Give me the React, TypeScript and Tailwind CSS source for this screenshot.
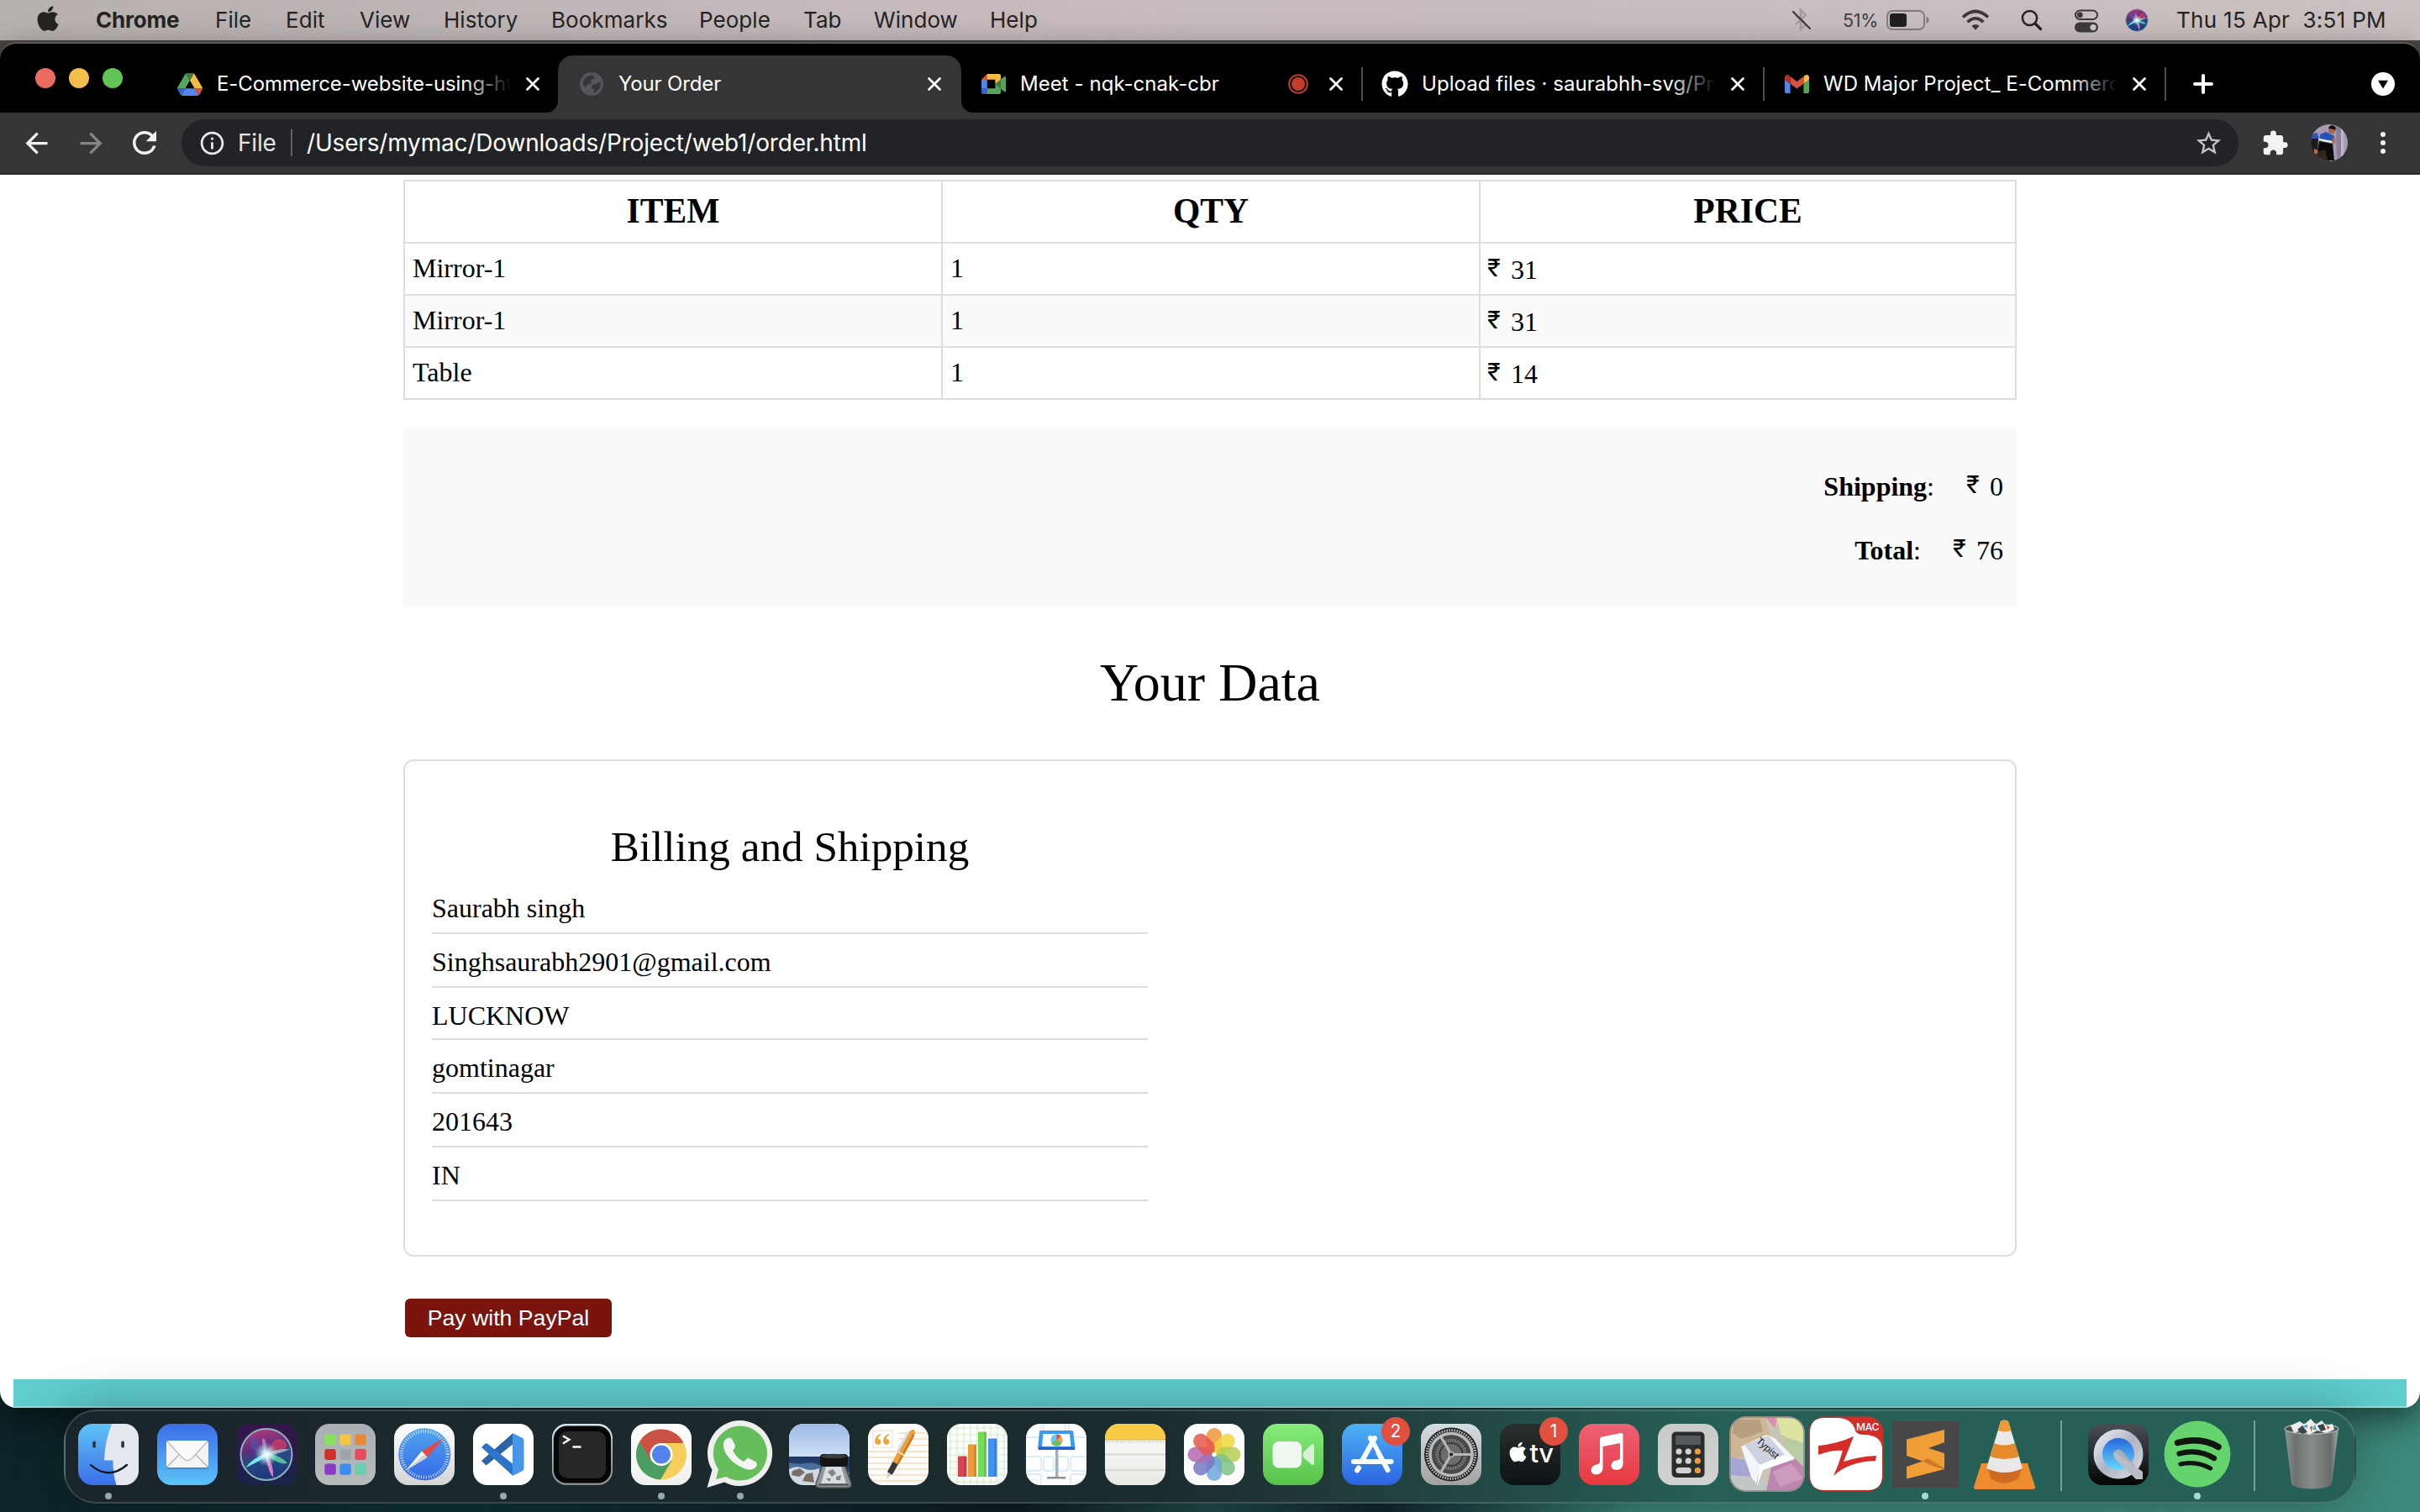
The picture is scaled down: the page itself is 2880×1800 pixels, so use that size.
import React from "react";
import {
  MdArrowBack,
  MdArrowForward,
  MdRefresh,
  MdInfoOutline,
  MdStarBorder,
  MdExtension,
} from "react-icons/md";
import { FaApple, FaGithub } from "react-icons/fa";

type Kids = { children?: React.ReactNode };

/* ------------------------------------------------------------ menu bar */

const menus: [string, string][] = [
  ["File", "w-[84px]"],
  ["Edit", "w-[88px]"],
  ["View", "w-[100px]"],
  ["History", "w-[128px]"],
  ["Bookmarks", "w-[176px]"],
  ["People", "w-[124px]"],
  ["Tab", "w-[84px]"],
  ["Window", "w-[138px]"],
  ["Help", "w-[90px]"],
];

function SiriOrb({ id, size }: { id: string; size: number }) {
  return (
    <svg width={size} height={size} viewBox="0 0 64 64" className="block shrink-0">
      <defs>
        <linearGradient id={id + "a"} x1="0" y1="0" x2="0.2" y2="1">
          <stop offset="0" stopColor="#c03a86" />
          <stop offset="0.45" stopColor="#5b2f78" />
          <stop offset="0.65" stopColor="#274a86" />
          <stop offset="1" stopColor="#1d3a7c" />
        </linearGradient>
        <radialGradient id={id + "b"}>
          <stop offset="0" stopColor="#fff" />
          <stop offset="0.3" stopColor="#dffcff" stopOpacity="0.85" />
          <stop offset="1" stopColor="#8fe8f0" stopOpacity="0" />
        </radialGradient>
      </defs>
      <circle cx="32" cy="32" r="30.5" fill={"url(#" + id + "a)"} stroke="#8fb3b5" strokeWidth="2" />
      <path d="M33 32Q40 6 55 17Q62 28 33 32Z" fill="#e0405f" opacity="0.65" />
      <path d="M31 32Q22 10 14 12Q6 28 31 32Z" fill="#5e4fa0" opacity="0.7" />
      <path d="M31 31Q16 36 7 48Q20 42 33 34Z" fill="#7ff0ee" opacity="0.95" />
      <path d="M32 30Q50 34 57 42Q50 46 32 33Z" fill="#58c9a0" opacity="0.9" />
      <path d="M31 31Q41 42 40 59Q36 56 30 33Z" fill="#f07fc6" opacity="0.95" />
      <path d="M31 32Q34 12 27 13Q26 22 30 33Z" fill="#e9a3dc" opacity="0.55" />
      <path d="M32 32Q46 24 60 26Q48 31 32 34Z" fill="#b6f2e6" opacity="0.6" />
      <circle cx="32" cy="32" r="14" fill={"url(#" + id + "b)"} />
    </svg>
  );
}

function MenuBar() {
  return (
    <div className="h-12 w-full flex items-center text-[#242323] text-[26px] bg-linear-to-r from-[#b7b1af] from-0% via-[#c6babd] via-40% to-[#cac0c0] tracking-[0.05px]">
      <div className="w-[114px] pl-[40px] shrink-0">
        <FaApple size={34} className="-mt-1" />
      </div>
      <div className="w-[142px] font-bold tracking-[-0.2px] -mt-[2px]">Chrome</div>
      {menus.map(([m, w]) => (
        <div key={m} className={w + " shrink-0 -mt-[2px]"}>
          {m}
        </div>
      ))}
      <div className="ml-auto flex items-center h-full">
        <div className="w-[61px]">
          <svg width="26" height="30" viewBox="0 0 26 30" fill="none">
            <path d="M5 9L17 20L11 26V3L17 9L5 20" stroke="#a19a9b" strokeWidth="2.4" />
            <path d="M2 5L22 25" stroke="#3b3939" strokeWidth="2.2" strokeLinecap="round" />
          </svg>
        </div>
        <div className="w-[52px] text-[21.5px] text-[#3f3c3d] tracking-[-0.3px]">51%</div>
        <div className="w-[89px]">
          <svg width="52" height="24" viewBox="0 0 52 24">
            <rect x="1" y="1" width="44" height="22" rx="6" fill="none" stroke="#7f797a" strokeWidth="1.8" />
            <rect x="4" y="4" width="20" height="16" rx="3" fill="#201f1f" />
            <path d="M47.5 8V16Q50.5 15 50.5 12T47.5 8Z" fill="#7f797a" />
          </svg>
        </div>
        <div className="w-[71px]">
          <svg width="34" height="26" viewBox="0 0 34 26" fill="none" stroke="#3a3838" strokeWidth="3.6">
            <path d="M2 9.5Q17 -4.5 32 9.5" />
            <path d="M7.6 15.3Q17 6.3 26.4 15.3" />
            <path d="M12.3 19.8Q17 16 21.7 19.8L17 24.8Z" fill="#3a3838" stroke="none" />
          </svg>
        </div>
        <div className="w-[63px]">
          <svg width="26" height="26" viewBox="0 0 26 26" fill="none" stroke="#242323" strokeLinecap="round">
            <circle cx="10.5" cy="10.5" r="8.6" strokeWidth="2.5" />
            <path d="M17 17L23.5 23.5" strokeWidth="3.2" />
          </svg>
        </div>
        <div className="w-[61px] pt-[2px]">
          <svg width="30" height="28" viewBox="0 0 30 28">
            <rect x="2" y="1.6" width="26" height="10.4" rx="5.2" fill="none" stroke="#3a3838" strokeWidth="2" />
            <circle cx="7.3" cy="6.8" r="3.4" fill="#3a3838" />
            <rect x="1" y="15.6" width="28" height="12" rx="6" fill="#3a3838" />
            <circle cx="23" cy="21.6" r="3.6" fill="#c9bfc0" />
          </svg>
        </div>
        <div className="w-[61px]">
          <SiriOrb id="ms" size={28} />
        </div>
        <div className="w-[290px] -mt-[2px] whitespace-pre tracking-[0.3px]">Thu 15 Apr  3:51 PM</div>
      </div>
    </div>
  );
}

/* ------------------------------------------------------------ favicons */

const DriveIcon = () => (
  <svg width="30" height="27" viewBox="0 0 87.3 78">
    <path d="m6.6 66.85 3.85 6.65c.8 1.4 1.95 2.5 3.3 3.3l13.75-23.8h-27.5c0 1.55.4 3.1 1.2 4.5z" fill="#3a62c9" />
    <path d="m43.65 25-13.75-23.8c-1.35.8-2.5 1.9-3.3 3.3l-25.4 44a9.06 9.06 0 0 0 -1.2 4.5h27.5z" fill="#57a55a" />
    <path d="m73.55 76.8c1.35-.8 2.5-1.9 3.3-3.3l1.6-2.75 7.65-13.25c.8-1.4 1.2-2.95 1.2-4.5h-27.502l5.852 11.5z" fill="#d85140" />
    <path d="m43.65 25 13.75-23.8c-1.35-.8-2.9-1.2-4.5-1.2h-18.5c-1.6 0-3.15.45-4.5 1.2z" fill="#3a7d3c" />
    <path d="m59.8 53h-32.3l-13.75 23.8c1.35.8 2.9 1.2 4.5 1.2h50.8c1.6 0 3.15-.45 4.5-1.2z" fill="#5187ec" />
    <path d="m73.4 26.5-12.7-22c-.8-1.4-1.95-2.5-3.3-3.3l-13.75 23.8 16.15 28h27.45c0-1.55-.4-3.1-1.2-4.5z" fill="#f2bd42" />
  </svg>
);

const GlobeIcon = () => (
  <svg width="28" height="28" viewBox="0 0 28 28">
    <circle cx="14" cy="14" r="14" fill="#54565c" />
    <path d="M5 9Q9 3 15 3.5L18 7L13 9.5L14 13L9 14.5L7 18L3.5 14ZM15 15L20 13.5L24.5 11Q26 19 19 23.8L16 24.5L17 20.5L13.5 18Z" fill="#35363a" />
  </svg>
);

const MeetIcon = () => (
  <svg width="29" height="24" viewBox="0 0 87.5 72">
    <path fill="#3a7d3c" d="M49.5 36l8.53 9.75 11.47 7.33 2-17.02-2-16.64-11.69 6.44z" />
    <path fill="#3a62c9" d="M0 51.5V66c0 3.315 2.685 6 6 6h14.5l3-10.96-3-9.54-9.95-3z" />
    <path fill="#d85140" d="M20.5 0L0 20.5l10.55 3 9.95-3 2.95-9.41z" />
    <path fill="#5187ec" d="M20.5 20.5H0v31h20.5z" />
    <path fill="#57a55a" d="M82.6 8.68L69.5 19.42v33.66l13.16 10.79c1.97 1.54 4.85.135 4.85-2.37V11c0-2.535-2.945-3.925-4.91-2.32zM49.5 36v15.5h-29V72h43c3.315 0 6-2.685 6-6V53.08z" />
    <path fill="#f2bd42" d="M63.5 0h-43v20.5h29V36l20-16.57V6c0-3.315-2.685-6-6-6z" />
  </svg>
);

const GmailIcon = () => (
  <svg width="29" height="22" viewBox="52 42 88 66">
    <path fill="#5187ec" d="M58 108h14V74L52 59v43c0 3.32 2.69 6 6 6" />
    <path fill="#57a55a" d="M120 108h14c3.32 0 6-2.69 6-6V59l-20 15" />
    <path fill="#f2bd42" d="M120 48v26l20-15v-8c0-7.42-8.47-11.65-14.4-7.2" />
    <path fill="#d85140" d="M72 74V48l24 18 24-18v26L96 92" />
    <path fill="#b7312c" d="M52 51v8l20 15V48l-5.6-4.2c-5.94-4.45-14.4-.22-14.4 7.2" />
  </svg>
);

const Cross = () => (
  <svg width="16" height="16" viewBox="0 0 16 16" stroke="#fff" strokeWidth="2.7" strokeLinecap="round">
    <path d="M1.5 1.5L14.5 14.5M14.5 1.5L1.5 14.5" />
  </svg>
);

/* ------------------------------------------------------------ tab strip */

type TabProps = {
  icon: React.ReactNode;
  title: string;
  spacing: string;
  active?: boolean;
  fade?: boolean;
  rec?: boolean;
  divider?: boolean;
};

function Tab({ icon, title, spacing, active, fade, rec, divider }: TabProps) {
  return (
    <div className={"relative h-[68px] w-[478px] shrink-0 flex items-center " + (active ? "bg-[#353535] rounded-t-[18px] z-10" : "")}>
      {active && (
        <>
          <svg className="absolute -left-[14px] bottom-0" width="14" height="14" viewBox="0 0 14 14">
            <path d="M14 0A14 14 0 0 1 0 14H14Z" fill="#353535" />
          </svg>
          <svg className="absolute -right-[16px] bottom-0" width="16" height="14" viewBox="0 0 16 14">
            <path d="M0 0H2A14 14 0 0 0 16 14H0Z" fill="#353535" />
          </svg>
          <div className="absolute -right-[2px] top-0 h-full w-[20px] rounded-tr-[18px] bg-[#353535]" />
        </>
      )}
      <div className="w-[32px] ml-[24px] flex justify-center shrink-0">{icon}</div>
      <div
        className={
          "relative ml-[16px] w-[350px] overflow-hidden whitespace-nowrap text-white text-[24px] leading-[34px] shrink-0 " + spacing
        }
      >
        {title}
        {fade && <div className="absolute right-0 top-0 h-full w-[56px] bg-linear-to-r from-transparent to-black" />}
        {rec && (
          <svg className="absolute right-[7px] top-[5px]" width="24" height="24" viewBox="0 0 24 24">
            <circle cx="12" cy="12" r="10.8" fill="none" stroke="#c43c2c" strokeWidth="2" />
            <circle cx="12" cy="12" r="8" fill="#c43c2c" />
          </svg>
        )}
      </div>
      <div className="relative ml-[18px]">
        <Cross />
      </div>
      {divider && <div className="ml-auto -mr-[2px] w-[2px] h-[40px] bg-[#4c4c4c]" />}
    </div>
  );
}

function TabStrip() {
  return (
    <div className="h-[84px] bg-black flex items-end rounded-t-[20px] border-t-2 border-[#5a5b5b]">
      <div className="w-[186px] shrink-0 pl-[42px] h-[66px] flex gap-4 pt-[13px]">
        <div className="size-6 rounded-full bg-[#ec6a5e]" />
        <div className="size-6 rounded-full bg-[#f4be4f]" />
        <div className="size-6 rounded-full bg-[#61c454]" />
      </div>
      <Tab icon={<DriveIcon />} title="E-Commerce-website-using-html" spacing="tracking-[-0.1px]" fade />
      <Tab icon={<GlobeIcon />} title="Your Order" spacing="tracking-[-0.15px]" active />
      <Tab icon={<MeetIcon />} title="Meet - nqk-cnak-cbr" spacing="tracking-[0.05px]" rec divider />
      <Tab icon={<FaGithub size={32} color="#fff" />} title="Upload files · saurabhh-svg/Project" spacing="tracking-[0.05px]" fade divider />
      <Tab icon={<GmailIcon />} title="WD Major Project_ E-Commerce" spacing="tracking-[0.05px]" fade divider />
      <div className="flex-1 h-[68px] flex items-center justify-between pl-[33px] pr-[30px]">
        <svg width="26" height="26" viewBox="0 0 26 26" stroke="#fff" strokeWidth="4" strokeLinecap="round">
          <path d="M13 3V23M3 13H23" />
        </svg>
        <svg width="28" height="28" viewBox="0 0 28 28">
          <circle cx="14" cy="14" r="14" fill="#fff" />
          <path d="M8 9.7H20L14 19.5Z" fill="#000" />
        </svg>
      </div>
    </div>
  );
}

function Avatar() {
  return (
    <svg width="44" height="44" viewBox="0 0 44 44" className="block">
      <defs>
        <clipPath id="avc">
          <circle cx="22" cy="22" r="22" />
        </clipPath>
      </defs>
      <g clipPath="url(#avc)">
        <rect width="44" height="44" fill="#a79bb4" />
        <path d="M30 0H36V44H31Z" fill="#8c7f9c" />
        <path d="M36 0H39V44H36Z" fill="#c2b8cb" />
        <path d="M0 12L9 14L8 44H0Z" fill="#17191d" />
        <path d="M1 12L8 10L9 17L1 17Z" fill="#2c58b8" />
        <path d="M5 32L20 28L26 34L22 44H6Z" fill="#35261d" />
        <path d="M21 4Q25 -2 30 4L29 8L22 6Z" fill="#15100f" />
        <path d="M21.5 5L29 6.5L27 12L21 10Z" fill="#a9694a" />
        <path d="M11 12L18 9L28 14L28 20L10 20Z" fill="#2453bb" />
        <path d="M10 17L26 20L26 22L9.500 19Z" fill="#fff" />
        <path d="M10 20L26 23L28 43H20L17 30L8 33Z" fill="#0b0b0d" />
        <path d="M26 16L30 18L28 24L25 22Z" fill="#b0704f" />
        <path d="M4 29L9 31L7 36L4 34Z" fill="#b0704f" />
      </g>
    </svg>
  );
}

function Toolbar() {
  return (
    <div className="h-[74px] bg-[#353535] border-b-2 border-[#28282a] flex items-center text-white">
      <div className="w-[216px] shrink-0 flex items-center pl-[24px]">
        <MdArrowBack size={39} color="#f1f3f4" />
        <MdArrowForward size={39} color="#868686" className="ml-[26px]" />
        <MdRefresh size={42} color="#f1f3f4" className="ml-[23px]" />
      </div>
      <div className="w-[2448px] h-[56px] rounded-full bg-[#222327] flex items-center text-[28px]">
        <MdInfoOutline size={33} color="#e8eaed" className="ml-[20px]" />
        <div className="ml-[14px] w-[63px] text-[#e4e5e7] tracking-[-0.2px]">File</div>
        <div className="w-[2px] h-[32px] bg-[#5f6164]" />
        <div className="ml-[17px] tracking-[-0.18px]">/Users/mymac/Downloads/Project/web1/order.html</div>
        <MdStarBorder size={35} color="#c3c4c6" className="ml-auto mr-[18px]" />
      </div>
      <MdExtension size={33} color="#f1f3f4" className="ml-[27px]" />
      <div className="ml-[26px]">
        <Avatar />
      </div>
      <div className="ml-[39px] flex flex-col gap-[4px]">
        <div className="size-[6px] rounded-full bg-[#f1f3f4]" />
        <div className="size-[6px] rounded-full bg-[#f1f3f4]" />
        <div className="size-[6px] rounded-full bg-[#f1f3f4]" />
      </div>
    </div>
  );
}

/* ------------------------------------------------------------ page */

const Rupee = () => <span className="inline-block w-[28px] -mt-[2px] text-[29px] font-['Inter',sans-serif]">₹</span>;

const items: [string, string, string][] = [
  ["Mirror-1", "1", "31"],
  ["Mirror-1", "1", "31"],
  ["Table", "1", "14"],
];

const address: [string, string][] = [
  ["Saurabh singh", "h-[64px]"],
  ["Singhsaurabh2901@gmail.com", "h-[64px]"],
  ["LUCKNOW", "h-[62px]"],
  ["gomtinagar", "h-[64px]"],
  ["201643", "h-[64px]"],
  ["IN", "h-[64px]"],
];

function Head({ children }: Kids) {
  return <div className="h-[74px] flex items-center justify-center font-bold text-[41.6px] leading-none border-r-2 border-b-2 border-[#ddd]">{children}</div>;
}

function OrderPage() {
  return (
    <div className="h-[1468px] bg-white rounded-b-[20px] overflow-hidden text-black text-[32px] font-['Liberation_Serif',serif] flex flex-col">
      <div className="w-[1920px] mx-auto pt-[6px] flex-1">
        <div className="border-t-2 border-l-2 border-[#ddd]">
          <div className="grid grid-cols-[640px_640px_638px]">
            <Head>ITEM</Head>
            <Head>QTY</Head>
            <Head>PRICE</Head>
          </div>
          {items.map(([name, qty, price], i) => (
            <div key={i} className={"grid grid-cols-[640px_640px_638px] leading-[58px] " + (i === 1 ? "bg-[#fafafa]" : "")}>
              <div className="h-[62px] pl-[9px] border-r-2 border-b-2 border-[#ddd]">{name}</div>
              <div className="h-[62px] pl-[9px] border-r-2 border-b-2 border-[#ddd]">{qty}</div>
              <div className="h-[62px] pl-[8px] border-r-2 border-b-2 border-[#ddd]">
                <div className="flex pt-[2px]">
                  <Rupee />
                  {price}
                </div>
              </div>
            </div>
          ))}
        </div>
        <div className="mt-[32px] h-[216px] bg-[#fafafa] pr-[16px] pt-[42px] flex flex-col items-end leading-[58px]">
          <div className="flex h-[76px]">
            <b>Shipping</b>:<span className="w-[38px]" />
            <Rupee />
            <span>0</span>
          </div>
          <div className="flex h-[76px]">
            <b>Total</b>:<span className="w-[38px]" />
            <Rupee />
            <span>76</span>
          </div>
        </div>
        <h1 className="h-[180px] pb-[3px] flex items-center justify-center text-[64px] leading-none">Your Data</h1>
        <div className="h-[592px] border-2 border-[#ddd] rounded-[12px] pl-[32px] pt-[72px]">
          <div className="w-[852px]">
            <h2 className="h-[60px] mb-[10px] flex items-center justify-center text-[51.2px] leading-none">Billing and Shipping</h2>
            {address.map(([line, h]) => (
              <div key={line} className={h + " border-b-2 border-[#ddd] leading-[66px]"}>
                {line}
              </div>
            ))}
          </div>
        </div>
        <button className="mt-[50px] ml-[2px] block w-[246px] h-[46px] rounded-[6px] bg-[#7a140c] text-white text-[26.67px] leading-[46px] text-center font-['Liberation_Sans',sans-serif]">
          Pay with PayPal
        </button>
      </div>
      <div className="mx-4 h-[34px] bg-[#5fcdce] border-b-2 border-[#8fdcdc]" />
    </div>
  );
}

/* ------------------------------------------------------------ dock icons */

function Squircle({ id, from, to, children }: Kids & { id: string; from: string; to: string }) {
  return (
    <svg width="72" height="73" viewBox="0 0 72 73" className="block overflow-visible">
      <defs>
        <linearGradient id={id} x1="0" y1="0" x2="0" y2="1">
          <stop offset="0" stopColor={from} />
          <stop offset="1" stopColor={to} />
        </linearGradient>
        <clipPath id={id + "c"}>
          <rect width="72" height="73" rx="17" />
        </clipPath>
      </defs>
      <g clipPath={"url(#" + id + "c)"}>
        <rect width="72" height="73" fill={"url(#" + id + ")"} />
        {children}
      </g>
    </svg>
  );
}

const Finder = () => (
  <Squircle id="fi" from="#5fc3f7" to="#3b6eea">
    <path d="M40 0Q32 20 31 42.500Q31 43.500 32 43.500H41.500Q41 58 45.500 73H72V0Z" fill="#e6e8ef" />
    <rect x="17.300" y="20.500" width="3.600" height="8" rx="1.500" fill="#2a3140" />
    <rect x="51.300" y="20.500" width="3.600" height="8" rx="1.500" fill="#2a3140" />
    <path d="M15 49Q36 67.500 58 49" fill="none" stroke="#14171c" strokeWidth="2.300" strokeLinecap="round" />
  </Squircle>
);

const Mail = () => (
  <Squircle id="ml" from="#3b6ce8" to="#5cc4f8">
    <rect x="11" y="22" width="50" height="32" rx="3" fill="#2b6fc0" opacity="0.5" />
    <rect x="11" y="20" width="50" height="32" rx="3" fill="#f4f4f4" />
    <path d="M12 51L27 36M60 51L45 36" stroke="#b4b4b4" strokeWidth="1.400" />
    <path d="M12 21L31 41.500Q36 46 41 41.500L60 21" fill="#fafafa" stroke="#bdbdbd" strokeWidth="1.400" />
  </Squircle>
);

const Siri = () => (
  <Squircle id="si" from="#35154c" to="#1a234c">
    <g transform="translate(4 4.500)">
      <SiriOrb id="ds" size={64} />
    </g>
  </Squircle>
);

const padColors = ["#86e25a", "#f5c544", "#e58a37", "#d23127", "#9ea4a8", "#ea4a5e", "#8a3cc6", "#3a8cf0", "#6acdab"];
const Launchpad = () => (
  <Squircle id="lp" from="#a9afb3" to="#b6bbbb">
    {padColors.map((c, i) => (
      <rect key={c} x={11.3 + (i % 3) * 18} y={12.3 + Math.floor(i / 3) * 17.6} width="13.500" height="13.200" rx="3" fill={c} />
    ))}
  </Squircle>
);

const Safari = () => (
  <Squircle id="sf" from="#ffffff" to="#d4d4d4">
    <defs>
      <linearGradient id="sfb" x1="0" y1="0" x2="0" y2="1">
        <stop offset="0" stopColor="#51a5f0" />
        <stop offset="1" stopColor="#3468e6" />
      </linearGradient>
    </defs>
    <circle cx="36.300" cy="36.300" r="31" fill="url(#sfb)" />
    <circle cx="36.300" cy="36.300" r="27.500" fill="none" stroke="#dcecff" strokeWidth="4" strokeDasharray="0.900 2" />
    <path d="M59 17L33 32.500L39.500 40Z" fill="#e5483c" />
    <path d="M14 55.500L33 32.500L39.500 40Z" fill="#f5f5f5" />
    <path d="M14 55.500L39.500 40L36.200 36.300Z" fill="#cfd4da" />
  </Squircle>
);

const VSCode = () => (
  <Squircle id="vs" from="#ffffff" to="#ffffff">
    <path d="M10 44L47 11.500V24.500L15.500 49.500Z" fill="#2b62a8" />
    <path d="M10 28L14.500 23.500Q16 23 17.500 24L47 47.500V61.500Z" fill="#2e74c8" />
    <path d="M47 11L59 17Q60.500 18 60.500 20V53Q60.500 55 59 56L47 62Z" fill="#4796ea" />
  </Squircle>
);

const Terminal = () => (
  <Squircle id="tm" from="#d6e6f2" to="#8b8b8d">
    <rect x="1.800" y="2.600" width="68.400" height="68" rx="15.500" fill="#050505" />
    <rect x="8" y="9" width="56" height="56" rx="10" fill="#272727" />
    <path d="M13 14.500L20.500 18.800L13 23.500" fill="none" stroke="#fff" strokeWidth="2.300" />
    <path d="M24.500 27.500H34.500" stroke="#fff" strokeWidth="2.300" />
  </Squircle>
);

const ChromeApp = () => (
  <Squircle id="ch" from="#ffffff" to="#f0f0f0">
    <circle cx="36" cy="36.500" r="30" fill="#f5cf5b" />
    <path d="M10 21.500A30 30 0 0 1 62 21.500L61.500 23H36L23 44Z" fill="#cb5244" />
    <path d="M10 21.500A30 30 0 0 0 35 66.500L48.500 43.500L24 44Z" fill="#4a9e63" />
    <circle cx="36" cy="36.500" r="13.500" fill="#fff" />
    <circle cx="36" cy="36.500" r="11" fill="#5384ee" />
  </Squircle>
);

const WhatsApp = () => (
  <svg width="80" height="80" viewBox="0 0 80 80" className="block">
    <path d="M40 0A39 39 0 1 1 21 73.500L0.500 80L6.500 59A39 39 0 0 1 40 0Z" fill="#efefef" />
    <path d="M40 6.500A32.500 32.500 0 1 1 23 67L11 70L14 58A32.500 32.500 0 0 1 40 6.500Z" fill="#66bd5b" />
    <path d="M23 22Q27 19 30 22L34 30Q34 33 31 36Q36 45 44 49L49 44.500L58 49Q61 51 59 55Q55 60 47 58Q25 50 20 32Q19 25 23 22Z" fill="#f4f4f4" />
  </svg>
);

const Preview = () => (
  <Squircle id="pv" from="#f4f4f5" to="#e4e4e6">
    <defs>
      <linearGradient id="pvs" x1="0" y1="0" x2="0" y2="1">
        <stop offset="0" stopColor="#9db8e8" />
        <stop offset="1" stopColor="#cfe0f5" />
      </linearGradient>
      <clipPath id="pvc">
        <rect x="4.500" y="6" width="62" height="61" rx="11" />
      </clipPath>
    </defs>
    <g clipPath="url(#pvc)">
      <rect width="72" height="39" fill="url(#pvs)" />
      <rect y="39" width="72" height="34" fill="#223a68" />
      <path d="M0 46Q10 49 20 47T40 51V56H0Z" fill="#4a6f9e" />
      <path d="M0 54Q9 49 17 53T36 53V73H0Z" fill="#cfdae4" />
      <path d="M4 56L13 53L19 58L12 63L3 61ZM20 60L28 58L30 70L16 68Z" fill="#7b6c64" />
    </g>
  </Squircle>
);

const Jar = () => (
  <svg width="44" height="42" viewBox="0 0 44 42" className="absolute left-[31px] top-[35px]">
    <path d="M9 14L1 36Q1 41 6 41H38Q43 41 43 36L35 14Z" fill="#8f9496" stroke="#55595b" strokeWidth="1.500" />
    <path d="M13 16L7 36H37L31 16Z" fill="#d9dddf" />
    <path d="M15 22L21 19L25 24L20 28ZM25 28L31 26L30 32L25 32ZM13 30L19 30L17 34Z" fill="#7c8590" />
    <path d="M4 37.500H40" stroke="#4c5052" strokeWidth="2" />
    <rect x="6" y="1" width="33" height="15" rx="4" fill="#141414" />
    <ellipse cx="22.500" cy="3.500" rx="15" ry="2.800" fill="#3c3c3c" />
  </svg>
);

const Pages = () => (
  <Squircle id="pg" from="#fefefe" to="#fbfbfb">
    <path d="M36 11H72M36 18H72M0 33H72M0 40H72M0 47H72M0 54H72M0 61H72M0 68H72M36 25.500H72" stroke="#f6dcbb" strokeWidth="1.300" />
    <rect x="6" y="8" width="23" height="20" fill="#fff" stroke="#f7dcc0" />
    <path d="M15.500 12Q8.500 13 8 20.500Q8.500 25 12 25Q15.500 24.500 15.500 21.300Q15 18 11.500 18Q12 14.500 15.500 13ZM25.500 12Q18.500 13 18 20.500Q18.500 25 22 25Q25.500 24.500 25.500 21.300Q25 18 21.500 18Q22 14.500 25.500 13Z" fill="#eba63c" />
    <g transform="translate(22 66) rotate(-61)">
      <path d="M0 0L9 -3V3Z" fill="#c9d3d8" />
      <rect x="8" y="-3.500" width="15" height="7" rx="1" fill="#36383a" />
      <path d="M22 -4H60Q67 -3 67.500 0Q67 3 60 4H22Z" fill="#eda13a" />
      <path d="M22 1.500H64Q62 4 60 4H22Z" fill="#c87a22" />
      <path d="M36 -4.500H61" stroke="#cfe0ea" strokeWidth="3" strokeLinecap="round" />
      <rect x="34" y="-4.500" width="2.500" height="9" fill="#f6d08d" />
    </g>
  </Squircle>
);

const Numbers = () => (
  <Squircle id="nb" from="#ffffff" to="#fafafa">
    <path
      d="M4 0V73M12 0V73M20 0V73M28 0V73M36 0V73M44 0V73M52 0V73M60 0V73M68 0V73M0 5H72M0 13H72M0 21H72M0 29H72M0 37H72M0 45H72M0 53H72M0 61H72M0 69H72"
      stroke="#cdeec4"
      strokeWidth="1.100"
    />
    <rect x="13" y="38.500" width="10.500" height="24.500" fill="#d64550" />
    <rect x="25" y="24.500" width="10" height="38.500" fill="#f09a3a" />
    <rect x="37" y="9.500" width="10" height="53.500" fill="#74dd58" />
    <rect x="49" y="17.500" width="10.500" height="45.500" fill="#4391f2" />
    <path d="M21.500 39V63M33.500 25V63M45.500 10V63M57.500 18V63" stroke="#000" strokeOpacity="0.15" strokeWidth="2" />
  </Squircle>
);

const Keynote = () => (
  <Squircle id="kn" from="#ffffff" to="#fdfdfd">
    <g fill="none" stroke="#d3e6f7" strokeWidth="1.400">
      <rect x="-12" y="-6" width="30" height="22" rx="3" />
      <rect x="21" y="-6" width="26" height="22" rx="3" />
      <rect x="51" y="-6" width="30" height="22" rx="3" />
      <rect x="-12" y="39" width="30" height="17" rx="3" />
      <rect x="21" y="39" width="12" height="17" rx="3" />
      <rect x="38" y="39" width="12" height="17" rx="3" />
      <rect x="53" y="39" width="26" height="17" rx="3" />
      <rect x="-12" y="60" width="30" height="20" rx="3" />
      <rect x="53" y="60" width="30" height="20" rx="3" />
    </g>
    <rect x="35" y="30" width="3.400" height="34" fill="#9fb0be" />
    <path d="M25 63H47.500V65.500H25Z" fill="#8f9498" />
    <path d="M17 8H55Q56 8 56.300 9.500L58.500 29Q58.500 31 57 31H15.500Q14 31 14.200 29L16 9.500Q16.200 8 17 8Z" fill="#3a9af0" />
    <path d="M20.500 12H52L53.500 27H19Z" fill="#fff" />
    <path d="M15 27.500H58V31H15Z" fill="#2a63c8" />
    <circle cx="36.500" cy="19.500" r="7" fill="#6ac8ef" />
    <path d="M36.500 19.500V12.500A7 7 0 0 1 42.500 23Z" fill="#f0a03c" />
    <path d="M36.500 19.500L42.500 23A7 7 0 0 1 30 22.500Z" fill="#67c257" />
    <path d="M36.500 19.500V12.500A7 7 0 0 1 41.500 14.500Z" fill="#d94a56" />
  </Squircle>
);

const Notes = () => (
  <Squircle id="nt" from="#ffffff" to="#e9e8e4">
    <rect width="72" height="18.500" fill="#f8cb45" />
    <path d="M0 19H72" stroke="#b79c4a" strokeWidth="1" />
    <path d="M2 21.800H72" stroke="#b9b9b6" strokeWidth="1.600" strokeDasharray="1.300 1.900" />
    <path d="M0 36.500H72M0 55H72" stroke="#cfcfcc" strokeWidth="1.300" />
  </Squircle>
);

const petals = ["#f0943a", "#eed940", "#b6cf52", "#7fc285", "#6ea6dc", "#7678c2", "#b368b0", "#e8574c"];
const Photos = () => (
  <Squircle id="ph" from="#ffffff" to="#fafafa">
    {petals.map((c, i) => (
      <rect key={c} x="27" y="5" width="18" height="29" rx="9" fill={c} opacity="0.85" transform={`rotate(${i * 45} 36 36.500)`} />
    ))}
    <circle cx="36" cy="36.500" r="1.500" fill="#fff" />
  </Squircle>
);

const FaceTime = () => (
  <Squircle id="ft" from="#86ec7a" to="#57c24a">
    <rect x="11.500" y="21" width="34.500" height="31.500" rx="7.500" fill="#eff8ee" />
    <path d="M48 34L58 24.500Q61 23 61 26V47Q61 50 58 48.500L48 40Q47 37 48 34Z" fill="#d8f0d4" />
  </Squircle>
);

const AppStore = () => (
  <Squircle id="as" from="#4eb2f7" to="#2b63e0">
    <g stroke="#f8fbff" strokeWidth="6" strokeLinecap="round">
      <path d="M39 17L24.500 43" />
      <path d="M34 17L54.500 55" />
      <path d="M14 45H58.500" />
      <path d="M20 52.500L18 55.500" />
    </g>
    <path d="M36.500 28L40 34.500" stroke="#3d86ec" strokeWidth="1.500" />
  </Squircle>
);

const Settings = () => (
  <Squircle id="st" from="#d5dee4" to="#a3a19f">
    <circle cx="36" cy="36.500" r="32" fill="#242526" />
    <circle cx="36" cy="36.500" r="28.800" fill="none" stroke="#bfc1c2" strokeWidth="3" strokeDasharray="1.500 1.520" />
    <circle cx="36" cy="36.500" r="25" fill="#48494a" stroke="#b9bbbc" strokeWidth="3.600" />
    <circle cx="36" cy="36.500" r="16.500" fill="#3a3b3c" stroke="#7b7d7e" strokeWidth="4" strokeDasharray="1.800 1" />
    <circle cx="36" cy="36.500" r="12.500" fill="#6a6c6d" />
    <path d="M36 36.500H61M36 36.500L23.500 15M36 36.500L23.500 58" stroke="#b4b6b7" strokeWidth="3.200" />
    <circle cx="36" cy="36.500" r="3" fill="#2b2c2d" stroke="#b4b6b7" strokeWidth="1.500" />
  </Squircle>
);

const AppleTV = () => (
  <div className="w-[72px] h-[73px] rounded-[17px] bg-linear-to-b from-[#2b2f2c] to-[#0c1216] flex items-center justify-center text-white">
    <FaApple size={27} className="-mt-[6px]" />
    <span className="text-[31px] leading-none font-medium -mt-[4px] tracking-[-0.5px]">tv</span>
  </div>
);

const Music = () => (
  <Squircle id="mu" from="#ec6176" to="#e8383f">
    <path d="M25 18.500Q25 16 27.500 15.500L50 11Q52.500 10.500 52.500 13V48Q52 55 44.500 55Q38.500 54.500 38.500 49.500Q39 44 45 43.500Q49 43 49 40V23L28.500 27V53Q28 60 20.500 60.500Q14.500 60 14.500 55Q15 49.500 21 48.500Q25 48 25 45Z" fill="#fff" />
  </Squircle>
);

const Calculator = () => (
  <Squircle id="ca" from="#c9cac9" to="#d2d2d0">
    <rect x="16.500" y="9.500" width="39" height="54.500" rx="5" fill="#2a2c2d" />
    <rect x="21" y="14" width="30" height="11" rx="1.500" fill="#56595b" />
    {[33, 44.2, 55.5].map((y) => (
      <g key={y}>
        {y < 50 ? (
          <>
            <circle cx="25" cy={y} r="3.600" fill="#d0d1d1" />
            <circle cx="36.200" cy={y} r="3.600" fill="#d0d1d1" />
          </>
        ) : (
          <rect x="21.400" y={y - 3.6} width="18.400" height="7.200" rx="3.600" fill="#d0d1d1" />
        )}
        <circle cx="47.400" cy={y} r="3.600" fill="#f19a37" />
      </g>
    ))}
  </Squircle>
);

const Typist = () => (
  <div className="relative size-[90px] shrink-0">
    <svg width="90" height="90" viewBox="0 0 90 90" className="block">
      <defs>
        <clipPath id="tyc">
          <rect x="0.500" y="0.500" width="89" height="89" rx="19" />
        </clipPath>
      </defs>
      <g clipPath="url(#tyc)">
        <rect width="90" height="90" fill="#c9c3b4" />
        <path d="M0 0H42L48 20L34 42L0 52Z" fill="#cdb695" />
        <path d="M6 4H36L40 18L14 27L4 20Z" fill="#b79f7f" />
        <path d="M42 0H58L54 14Z" fill="#dc8fae" />
        <path d="M56 2L90 4V34L62 22Z" fill="#dfe3a0" />
        <path d="M62 24L90 32V60L72 50Z" fill="#b9cba3" />
        <path d="M0 48L18 52L28 70L22 90H0Z" fill="#a5a6d6" />
        <path d="M0 70L26 72L46 80L40 90H0Z" fill="#c2c7c4" />
        <path d="M50 60L78 50L90 62V90H44Z" fill="#bd86ae" />
        <path d="M52 66L74 56L88 74L60 84Z" fill="#cb9bc0" />
        <path d="M14 36L44 22L54 26L78 50L36 62L32 80L26 72Z" fill="#f3f5fa" />
        <path d="M18 34L46 23L66 46L36 58Z" fill="#ccd2de" />
        <path d="M36 58L66 46L78 51L40 64L33 84Z" fill="#fff" />
      </g>
      <rect x="1" y="1" width="88" height="88" rx="18.500" fill="none" stroke="#8d8a86" strokeWidth="1.600" />
    </svg>
    <span className="absolute left-[30px] top-[32px] rotate-[42deg] text-[12px] leading-none text-[#1d1f25] origin-center font-['Liberation_Sans',sans-serif]">Typist</span>
  </div>
);

const ZMac = () => (
  <div className="relative size-[90px] shrink-0">
    <svg width="90" height="90" viewBox="0 0 90 90" className="block">
      <rect x="0.500" y="0.500" width="89" height="89" rx="19" fill="#d42d28" />
      <path d="M19 2H34Q50 2 55 14Q56 22 66 22Q88 22 88 40V70Q88 88 70 88H20Q2 88 2 70V20Q2 2 19 2Z" fill="#fff" />
      <path d="M12 35Q34 33 54 24L42 54Q60 48 81 47L80 53Q48 54 30 71Q37 56 41 41Q28 40 12 46Z" fill="#d42d28" />
    </svg>
    <span className="absolute right-[6px] top-[7px] text-[12px] leading-none text-white font-medium tracking-[-0.3px]">MAC</span>
  </div>
);

const Sublime = () => (
  <svg width="79" height="79" viewBox="0 0 79 79" className="block">
    <rect width="79" height="79" rx="3" fill="#474747" />
    <path d="M17 21.500L62 10V25L43 32L62 38V57L17 68.500V54L36 47.500L17 41Z" fill="#f19d38" />
    <path d="M36 47.500L42 44L62 56V57L50 54Z" fill="#c97a22" />
  </svg>
);

const VLC = () => (
  <svg width="73" height="83" viewBox="0 0 73 83" className="block">
    <path d="M9 52H64L73 80Q73 83 70 83H3Q0 83 0 80Z" fill="#ee8c2f" />
    <path d="M16 56L20 70Q36 81 53 70L58 56Z" fill="#cf6a22" />
    <path d="M32 2Q36 -1 41 2L58 58Q37 68 15 58Z" fill="#e9e9ea" />
    <path d="M32 2Q36 -1 41 2L44.500 13Q36 16 29 13Z" fill="#f09a35" />
    <path d="M24 28Q36 33 49 28L54 44Q36 50 19.500 44Z" fill="#e58a2d" />
  </svg>
);

const QuickTime = () => (
  <Squircle id="qt" from="#4b4e53" to="#040404">
    <defs>
      <linearGradient id="qtr" x1="0" y1="0" x2="1" y2="1">
        <stop offset="0" stopColor="#f1f4fa" />
        <stop offset="0.500" stopColor="#aeb4c2" />
        <stop offset="1" stopColor="#dcdfe6" />
      </linearGradient>
      <linearGradient id="qtb" x1="0" y1="0" x2="0" y2="1">
        <stop offset="0" stopColor="#2767dd" />
        <stop offset="1" stopColor="#65d8fb" />
      </linearGradient>
    </defs>
    <circle cx="36" cy="36" r="29.500" fill="url(#qtr)" />
    <circle cx="36" cy="36" r="19" fill="url(#qtb)" />
    <path d="M31 33Q36 28 41 33L62 57Q65 60 65 66H57Z" fill="#a8adb8" />
    <path d="M31 33Q29 38 32 42L53 62L57 66H65V57Z" fill="#b9bdc7" />
  </Squircle>
);

const Spotify = () => (
  <svg width="80" height="80" viewBox="0 0 80 80" className="block">
    <circle cx="40" cy="40" r="39.500" fill="#65d46e" />
    <g fill="none" stroke="#10150f" strokeLinecap="round">
      <path d="M16.500 26.500Q44 19 65 31.500" strokeWidth="7.500" />
      <path d="M18.500 39.500Q41 33.500 60 45" strokeWidth="6.300" />
      <path d="M20 52Q39 47.500 55.500 57" strokeWidth="5.300" />
    </g>
  </svg>
);

const Trash = () => (
  <svg width="66" height="84" viewBox="0 0 66 84" className="block">
    <defs>
      <linearGradient id="trg" x1="0" y1="0" x2="1" y2="0">
        <stop offset="0" stopColor="#8d9492" />
        <stop offset="0.200" stopColor="#6c706f" />
        <stop offset="0.500" stopColor="#8a8d8c" />
        <stop offset="0.850" stopColor="#686c6b" />
        <stop offset="1" stopColor="#a0a7a5" />
      </linearGradient>
    </defs>
    <path d="M1 12Q33 24 65 12L57 77Q55 83 33 83.500Q11 83 9 77Z" fill="url(#trg)" />
    <ellipse cx="33" cy="12" rx="32" ry="6" fill="#4b504f" stroke="#a7adab" strokeWidth="1.300" />
    <path d="M8 8L19 3L24 7L32 0L38 7L45 2L50 8L58 6L60 13L50 17L40 14L30 19L20 14L12 17Z" fill="#ececec" />
    <path d="M16 13L22 8L28 16L22 18ZM40 8L47 6L50 13L44 15Z" fill="#3d434a" />
    <path d="M22 9L28 7L28 11ZM34 12L37 7L39 14Z" fill="#3aa9c4" />
    <path d="M31 10L34 8L33 16ZM51 8L55 10L52 13Z" fill="#c4583a" />
  </svg>
);

function Badge({ children }: Kids) {
  return (
    <div className="absolute left-[58px] top-[7px] size-[34px] rounded-full bg-[#e04f40] text-white text-[21px] leading-[34px] text-center">{children}</div>
  );
}

function DockItem({ children, running, tone, badge }: Kids & { running?: boolean; tone?: string; badge?: string }) {
  return (
    <div className="relative w-[94px] h-full shrink-0 flex items-center justify-center pb-[6px]">
      <div className="relative">{children}</div>
      {running && <div className={"absolute bottom-[3px] left-[43px] size-2 rounded-full " + (tone ?? "bg-[#93a9ab]")} />}
      {badge && <Badge>{badge}</Badge>}
    </div>
  );
}

const Divider = () => <div className="w-[2px] h-[84px] mx-5 bg-[#69a698] shrink-0 mb-[2px]" />;

function Dock() {
  return (
    <div className="relative z-20 mt-[2px] ml-[76px] w-[2728px] h-[112px] rounded-[38px] border-2 border-white/15 shadow-[0_0_60px_rgba(0,0,0,0.3)] bg-linear-to-r from-[#1a252b] from-0% via-[#1c2c2e] via-48% to-[#265f55] to-72% flex items-center pl-[4px]">
      <DockItem running><Finder /></DockItem>
      <DockItem><Mail /></DockItem>
      <DockItem><Siri /></DockItem>
      <DockItem><Launchpad /></DockItem>
      <DockItem><Safari /></DockItem>
      <DockItem running><VSCode /></DockItem>
      <DockItem><Terminal /></DockItem>
      <DockItem running><ChromeApp /></DockItem>
      <DockItem running><WhatsApp /></DockItem>
      <DockItem><Preview /><Jar /></DockItem>
      <DockItem><Pages /></DockItem>
      <DockItem><Numbers /></DockItem>
      <DockItem><Keynote /></DockItem>
      <DockItem><Notes /></DockItem>
      <DockItem><Photos /></DockItem>
      <DockItem><FaceTime /></DockItem>
      <DockItem badge="2"><AppStore /></DockItem>
      <DockItem><Settings /></DockItem>
      <DockItem badge="1"><AppleTV /></DockItem>
      <DockItem><Music /></DockItem>
      <DockItem><Calculator /></DockItem>
      <DockItem><Typist /></DockItem>
      <DockItem><ZMac /></DockItem>
      <DockItem running tone="bg-[#a3dccf]"><Sublime /></DockItem>
      <DockItem><VLC /></DockItem>
      <Divider />
      <DockItem><QuickTime /></DockItem>
      <DockItem running tone="bg-[#a3dccf]"><Spotify /></DockItem>
      <Divider />
      <DockItem><Trash /></DockItem>
    </div>
  );
}

/* ------------------------------------------------------------ desktop */

export default function App() {
  return (
    <div className="w-[2880px] h-[1800px] overflow-hidden font-['Inter',sans-serif] bg-[linear-gradient(90deg,#0c2529_0%,#0e3133_20%,#0f2a30_28%,#0e1c22_42%,#1f4a48_50%,#0f252b_57%,#3a8576_68%,#3e8a7c_100%)]">
      <MenuBar />
      <div className="bg-[linear-gradient(#4e4540_0,#4e4540_20px,transparent_20px)] pt-[2px]">
        <div className="rounded-[20px] shadow-[0_14px_40px_rgba(0,0,0,0.55)]">
          <TabStrip />
          <Toolbar />
          <OrderPage />
        </div>
      </div>
      <Dock />
    </div>
  );
}
